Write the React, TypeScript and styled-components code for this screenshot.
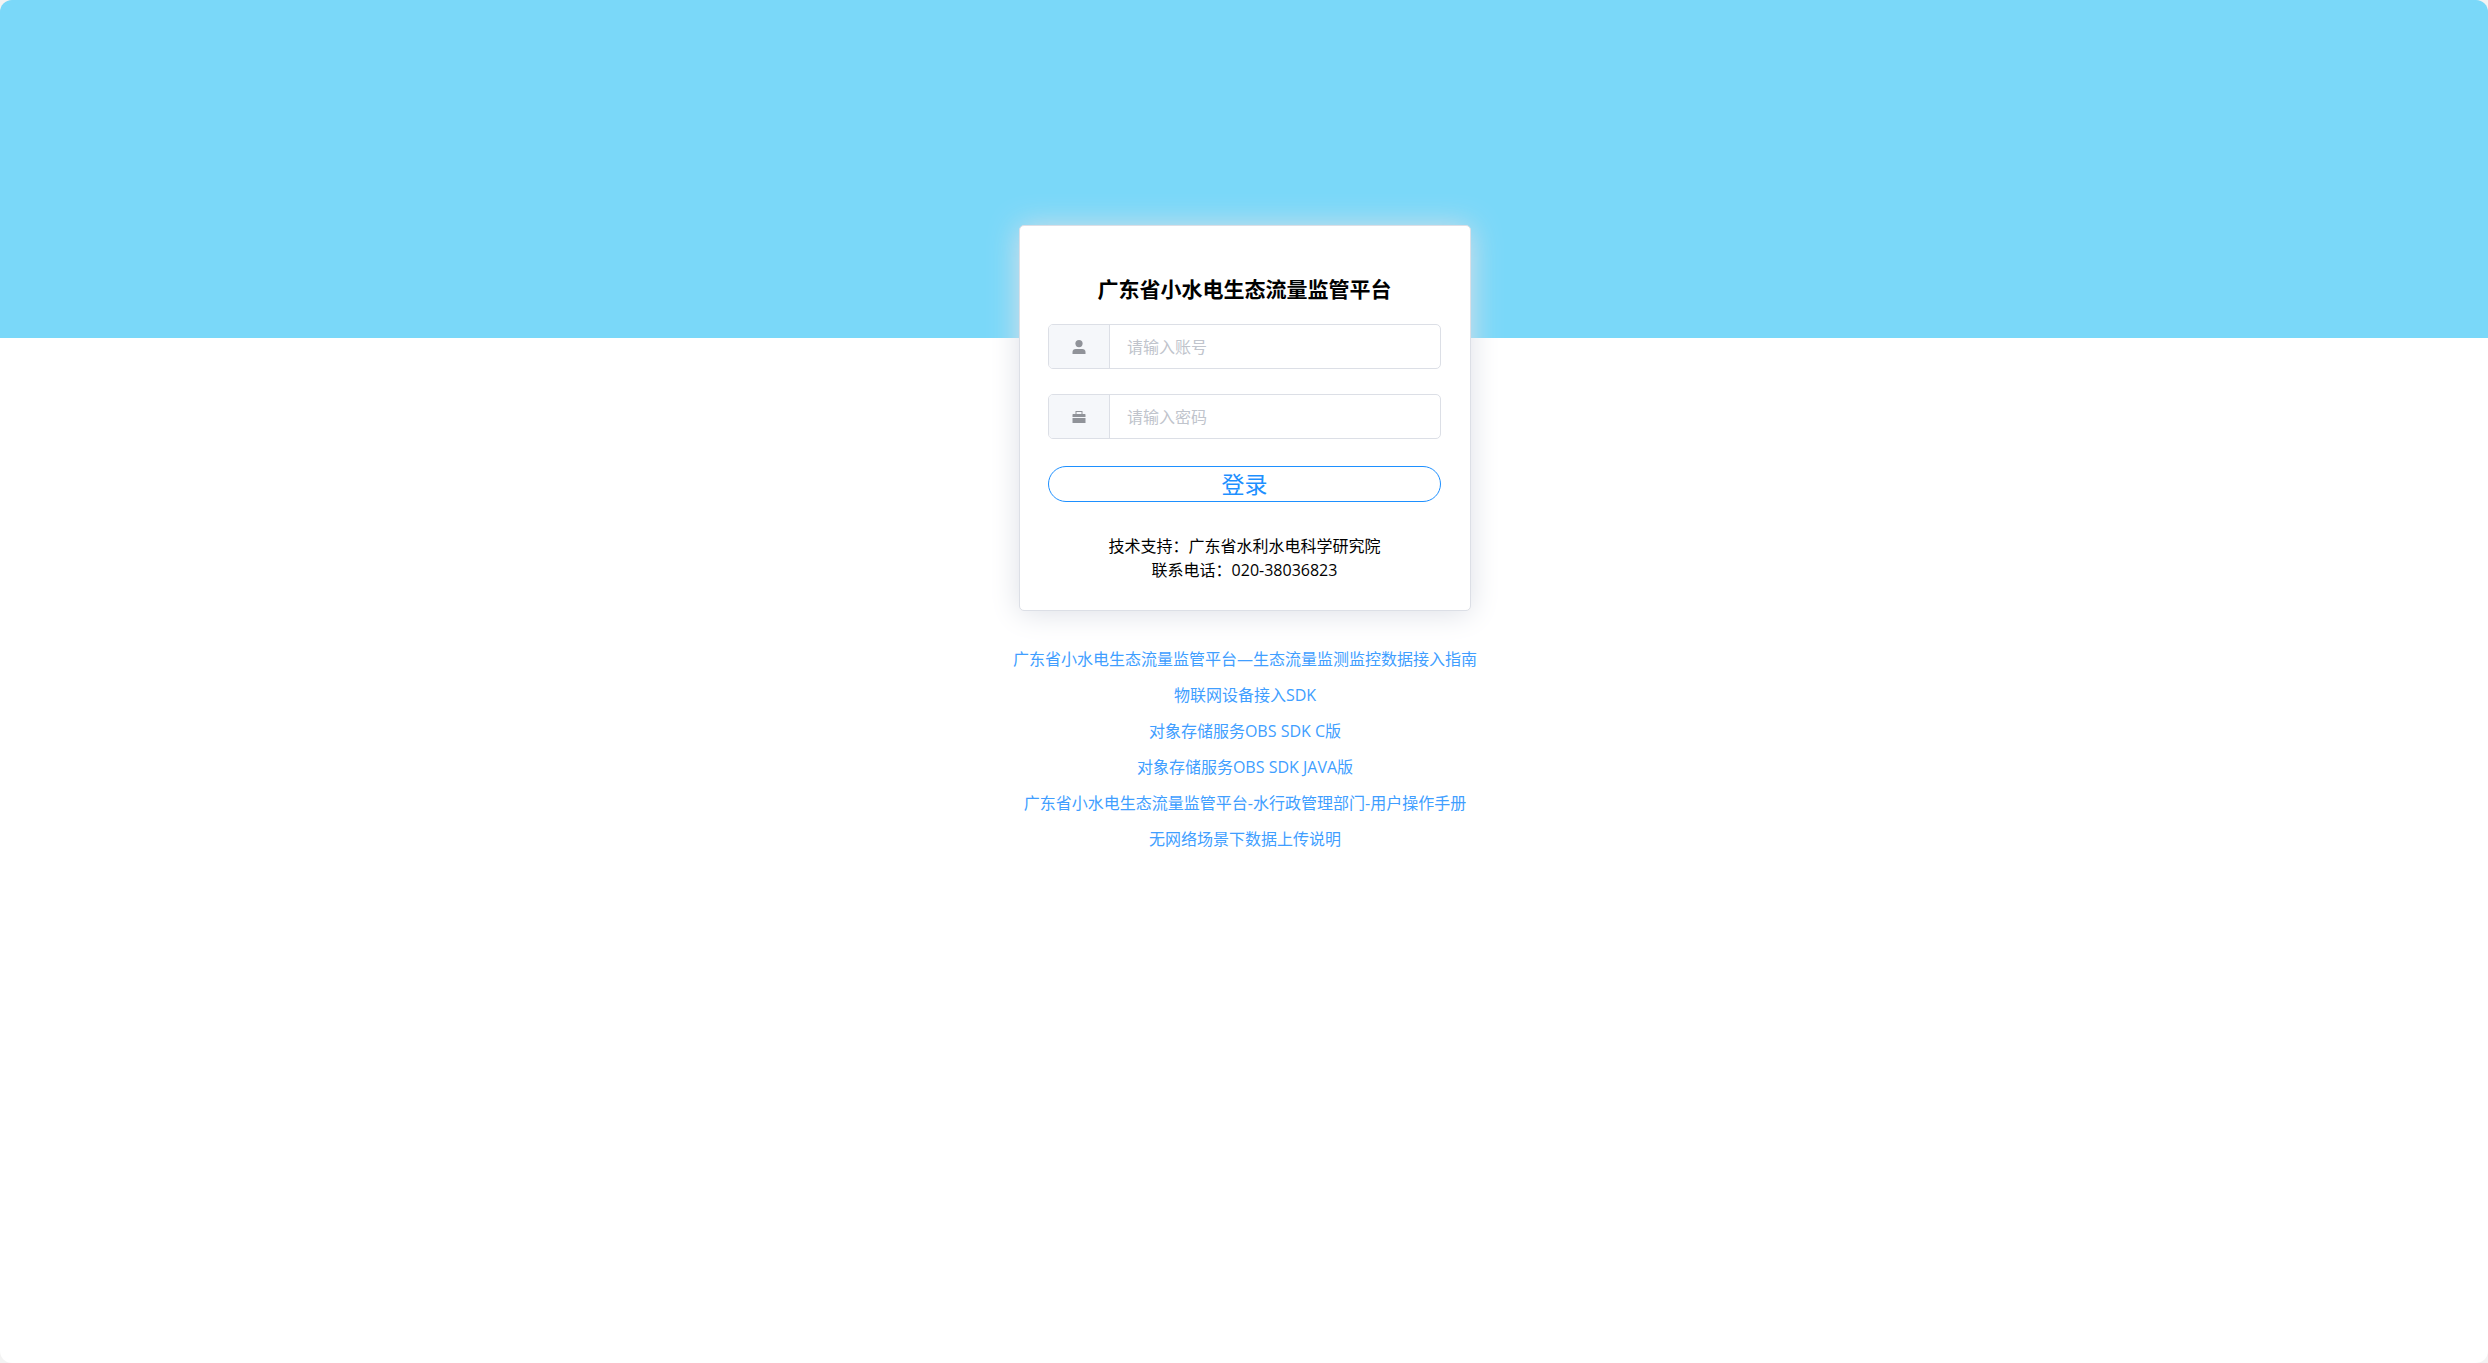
import React, { useState } from "react";
import styled, { createGlobalStyle } from "styled-components";

const GlobalStyle = createGlobalStyle`
  * {
    box-sizing: border-box;
  }
  body {
    margin: 0;
    background: #f3f3f3;
    color: #000;
    font-family: "Open Sans", "Noto Sans CJK SC", sans-serif;
    font-size: 16px;
    line-height: 24px;
  }
  input,
  button {
    font-family: inherit;
  }
`;

const Page = styled.div`
  display: flex;
  flex-direction: column;
  align-items: center;
  min-height: 100vh;
  padding: 225px 16px 48px 18px;
  border-radius: 12px;
  background: linear-gradient(#7ad8f9, #7ad8f9) top / 100% 338px no-repeat #fff;
`;

const Card = styled.main`
  width: 100%;
  max-width: 452px;
  padding: 47px 29px 28px 28px;
  border: 1px solid #dcdfe6;
  border-radius: 5px;
  background: #fff;
  box-shadow: 0 2px 30px #dcdfe6;
`;

const Title = styled.h1`
  margin: 0 0 19px;
  font-size: 21px;
  line-height: 32px;
  font-weight: 700;
  text-align: center;
`;

const Form = styled.form`
  display: flex;
  flex-direction: column;
`;

const Field = styled.div`
  display: flex;
  height: 45px;
  margin-bottom: 25px;
  border: 1px solid #dcdfe6;
  border-radius: 5px;
  background: #fff;
  overflow: hidden;

  &:focus-within {
    border-color: #409eff;
  }
`;

const Addon = styled.label`
  display: flex;
  align-items: center;
  justify-content: center;
  width: 61px;
  border-right: 1px solid #dcdfe6;
  background: #f5f7fa;
  color: #909399;
`;

const TextInput = styled.input`
  flex: 1;
  min-width: 0;
  padding: 0 17px;
  border: 0;
  outline: 0;
  background: transparent;
  color: #606266;
  font-size: 16px;

  &::placeholder {
    color: #c0c4cc;
    opacity: 1;
  }
`;

const LoginButton = styled.button`
  height: 36px;
  margin-top: 2px;
  padding: 0;
  border: 1px solid #1e90ff;
  border-radius: 18px;
  background: #fff;
  color: #1e90ff;
  font-size: 23px;
  line-height: 32px;
  cursor: pointer;
`;

const Support = styled.p`
  margin: 32px 0 0;
  text-align: center;
`;

const Line = styled.span`
  display: block;
`;

const Downloads = styled.nav`
  display: flex;
  flex-direction: column;
  align-items: center;
  margin-top: 30px;
`;

const DownloadLink = styled.a`
  color: #409eff;
  line-height: 36px;
  text-align: center;
  text-decoration: none;
`;

const UserIcon = () => (
  <svg width="14" height="14" viewBox="0 0 14 14" fill="currentColor" aria-hidden="true">
    <circle cx="7" cy="3.6" r="3.6" />
    <path d="M.5 14v-2C.5 10 1.800 9 3.800 9h6.400c2 0 3.300 1 3.300 3v2z" />
  </svg>
);

const CaseIcon = () => (
  <svg width="14" height="14" viewBox="0 0 14 14" fill="currentColor" aria-hidden="true">
    <path d="M3.500 4V1h7v3h2.500l.5.5V7H.5V4.500L1 4zM4.500 4h5V2h-5z" fillRule="evenodd" />
    <path d="M.5 8h13v5H.5z" />
  </svg>
);

const links = [
  "广东省小水电生态流量监管平台—生态流量监测监控数据接入指南",
  "物联网设备接入SDK",
  "对象存储服务OBS SDK C版",
  "对象存储服务OBS SDK JAVA版",
  "广东省小水电生态流量监管平台-水行政管理部门-用户操作手册",
  "无网络场景下数据上传说明",
];

export default function App() {
  const [account, setAccount] = useState("");
  const [password, setPassword] = useState("");

  return (
    <>
      <GlobalStyle />
      <Page>
        <Card>
          <Title>广东省小水电生态流量监管平台</Title>
          <Form onSubmit={(e: React.FormEvent) => e.preventDefault()}>
            <Field>
              <Addon htmlFor="account" aria-label="账号">
                <UserIcon />
              </Addon>
              <TextInput
                id="account"
                type="text"
                placeholder="请输入账号"
                value={account}
                onChange={(e) => setAccount(e.target.value)}
              />
            </Field>
            <Field>
              <Addon htmlFor="password" aria-label="密码">
                <CaseIcon />
              </Addon>
              <TextInput
                id="password"
                type="password"
                placeholder="请输入密码"
                value={password}
                onChange={(e) => setPassword(e.target.value)}
              />
            </Field>
            <LoginButton type="submit">登录</LoginButton>
          </Form>
          <Support>
            <Line>技术支持：广东省水利水电科学研究院</Line>
            <Line>联系电话：020-38036823</Line>
          </Support>
        </Card>
        <Downloads>
          {links.map((text) => (
            <DownloadLink key={text} href="#">
              {text}
            </DownloadLink>
          ))}
        </Downloads>
      </Page>
    </>
  );
}
